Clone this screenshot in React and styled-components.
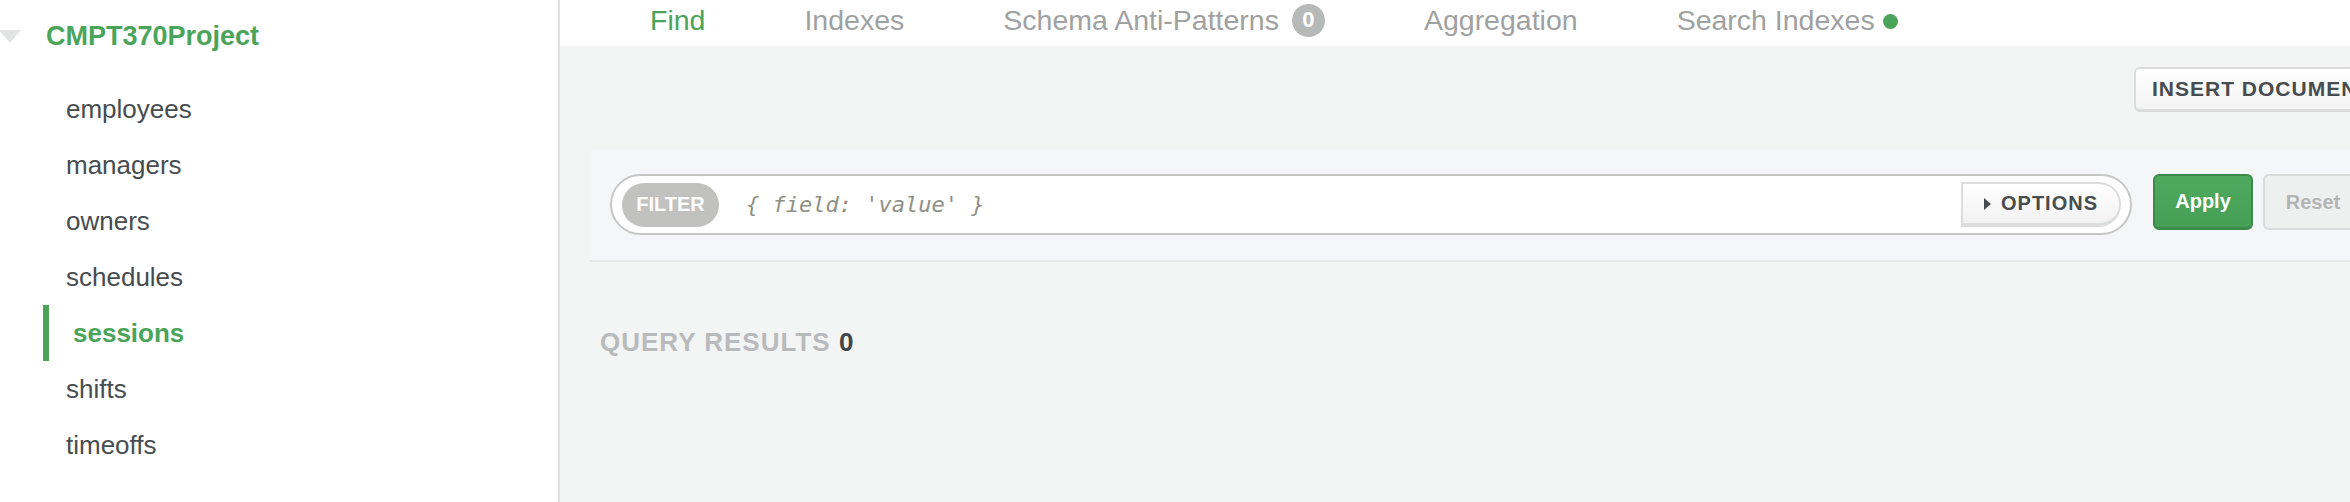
import React from "react";
import styled, { createGlobalStyle } from "styled-components";

const GlobalStyle = createGlobalStyle`
  html, body {
    margin: 0;
    padding: 0;
    overflow: hidden;
    background: #ffffff;
    font-family: "Liberation Sans", Arial, Helvetica, sans-serif;
  }
  * { box-sizing: border-box; }
`;

const GREEN = "#4aa55b";
const DARK = "#464c4f";

const Layout = styled.div`
  display: flex;
  width: 2384px;
  height: 502px;
`;

const Sidebar = styled.aside`
  flex: none;
  width: 560px;
  height: 100%;
  background: #ffffff;
  border-right: 2px solid #dfe1e1;
  display: flex;
  flex-direction: column;
`;

const DbRow = styled.div`
  display: flex;
  align-items: center;
  height: 72px;
  gap: 25px;
`;

const Caret = styled.span`
  width: 0;
  height: 0;
  border-left: 11px solid transparent;
  border-right: 11px solid transparent;
  border-top: 13px solid #e2e3e3;
  margin-left: -1px;
`;

const DbName = styled.span`
  font-size: 27px;
  font-weight: bold;
  color: ${GREEN};
`;

const CollectionList = styled.ul`
  list-style: none;
  margin: 9px 0 0 0;
  padding: 0;
`;

const Collection = styled.li`
  height: 56px;
  display: flex;
  align-items: center;
  margin-left: 43px;
  padding-left: ${(p) => (p.$active ? "24px" : "23px")};
  border-left: ${(p) => (p.$active ? `6px solid ${GREEN}` : "none")};
  font-size: 26px;
  font-weight: ${(p) => (p.$active ? "bold" : "normal")};
  color: ${(p) => (p.$active ? GREEN : DARK)};
`;

const Main = styled.main`
  flex: 1;
  display: flex;
  flex-direction: column;
  background: #f3f4f4;
  min-width: 0;
`;

const TabBar = styled.nav`
  height: 46px;
  background: #ffffff;
  display: flex;
  align-items: center;
  padding: 0 0 6px 90px;
  gap: 99px;
`;

const Tab = styled.span`
  display: flex;
  align-items: center;
  font-size: 28.5px;
  color: ${(p) => (p.$active ? GREEN : "#a0a1a1")};
  white-space: nowrap;
`;

const CountBadge = styled.span`
  display: inline-flex;
  align-items: center;
  justify-content: center;
  width: 33px;
  height: 33px;
  border-radius: 50%;
  background: #b7b8b8;
  color: #ffffff;
  font-size: 22px;
  font-weight: bold;
  margin-left: 13px;
`;

const StatusDot = styled.span`
  width: 15px;
  height: 15px;
  border-radius: 50%;
  background: ${GREEN};
  margin-left: 8px;
  margin-top: 3px;
`;

const TopBar = styled.div`
  height: 104px;
  display: flex;
  justify-content: flex-start;
  align-items: flex-start;
  padding: 21px 0 0 1574px;
`;

const InsertButton = styled.button`
  height: 45px;
  padding: 0 16px;
  font-family: inherit;
  font-size: 21px;
  font-weight: bold;
  letter-spacing: 1px;
  color: ${DARK};
  background: linear-gradient(#ffffff, #f3f3f3);
  border: 2px solid #dadcdc;
  border-bottom-width: 3px;
  border-radius: 6px;
  white-space: nowrap;
`;

const QueryPanel = styled.div`
  margin-left: 30px;
  display: flex;
  align-items: flex-start;
  padding: 24px 21px 25px 20px;
  background: #f5f6f7;
  border-bottom: 2px solid #e6e8e8;
`;

const FilterBox = styled.div`
  flex: 1;
  height: 61px;
  display: flex;
  align-items: center;
  padding: 0 9px 0 10px;
  background: #ffffff;
  border: 2px solid #c6c7c5;
  border-radius: 31px;
`;

const FilterPill = styled.span`
  flex: none;
  width: 97px;
  height: 44px;
  border-radius: 22px;
  background: #c1c1bf;
  color: #ffffff;
  font-size: 20px;
  font-weight: bold;
  display: flex;
  align-items: center;
  justify-content: center;
`;

const Placeholder = styled.span`
  flex: 1;
  margin-left: 27px;
  font-family: "DejaVu Sans Mono", "Liberation Mono", monospace;
  font-style: italic;
  font-size: 22px;
  color: #8e9085;
  white-space: pre;
`;

const OptionsButton = styled.button`
  flex: none;
  width: 160px;
  height: 45px;
  display: flex;
  align-items: center;
  justify-content: center;
  gap: 10px;
  font-family: inherit;
  font-size: 20px;
  font-weight: bold;
  letter-spacing: 1px;
  color: ${DARK};
  background: linear-gradient(#ffffff, #f2f2f2);
  border: 2px solid #dcdede;
  border-bottom-width: 4px;
  border-radius: 0 22px 22px 0;
  padding: 0;
`;

const OptionsCaret = styled.span`
  width: 0;
  height: 0;
  border-top: 6px solid transparent;
  border-bottom: 6px solid transparent;
  border-left: 7px solid ${DARK};
`;

const ActionButton = styled.button`
  flex: none;
  height: 56px;
  width: 100px;
  margin-left: ${(p) => p.$gap}px;
  font-family: inherit;
  font-size: 20px;
  font-weight: bold;
  border-radius: 6px;
  color: ${(p) => (p.$primary ? "#ffffff" : "#b3b4b4")};
  background: ${(p) =>
    p.$primary ? "linear-gradient(#4fa95e, #45a055)" : "#eeefef"};
  border: 2px solid ${(p) => (p.$primary ? "#3d8a4a" : "#d9dbdb")};
  border-bottom-width: ${(p) => (p.$primary ? "3px" : "2px")};
`;

const Results = styled.div`
  margin: 65px 0 0 40px;
  font-size: 26px;
  line-height: 30px;
  font-weight: bold;
  letter-spacing: 1px;
  color: #b9babb;
`;

const ResultCount = styled.span`
  color: #3f4548;
`;

const collections = [
  "employees",
  "managers",
  "owners",
  "schedules",
  "sessions",
  "shifts",
  "timeoffs",
];

export default function App() {
  return (
    <>
      <GlobalStyle />
      <Layout>
        <Sidebar>
          <DbRow>
            <Caret />
            <DbName>CMPT370Project</DbName>
          </DbRow>
          <CollectionList>
            {collections.map((c) => (
              <Collection key={c} $active={c === "sessions"}>
                {c}
              </Collection>
            ))}
          </CollectionList>
        </Sidebar>
        <Main>
          <TabBar>
            <Tab $active>Find</Tab>
            <Tab>Indexes</Tab>
            <Tab>
              Schema Anti-Patterns<CountBadge>0</CountBadge>
            </Tab>
            <Tab>Aggregation</Tab>
            <Tab>
              Search Indexes<StatusDot />
            </Tab>
          </TabBar>
          <TopBar>
            <InsertButton>INSERT DOCUMENT</InsertButton>
          </TopBar>
          <QueryPanel>
            <FilterBox>
              <FilterPill>FILTER</FilterPill>
              <Placeholder>{"{ field: 'value' }"}</Placeholder>
              <OptionsButton>
                <OptionsCaret />
                OPTIONS
              </OptionsButton>
            </FilterBox>
            <ActionButton $primary $gap={21}>
              Apply
            </ActionButton>
            <ActionButton $gap={10}>Reset</ActionButton>
          </QueryPanel>
          <Results>
            QUERY RESULTS <ResultCount>0</ResultCount>
          </Results>
        </Main>
      </Layout>
    </>
  );
}
